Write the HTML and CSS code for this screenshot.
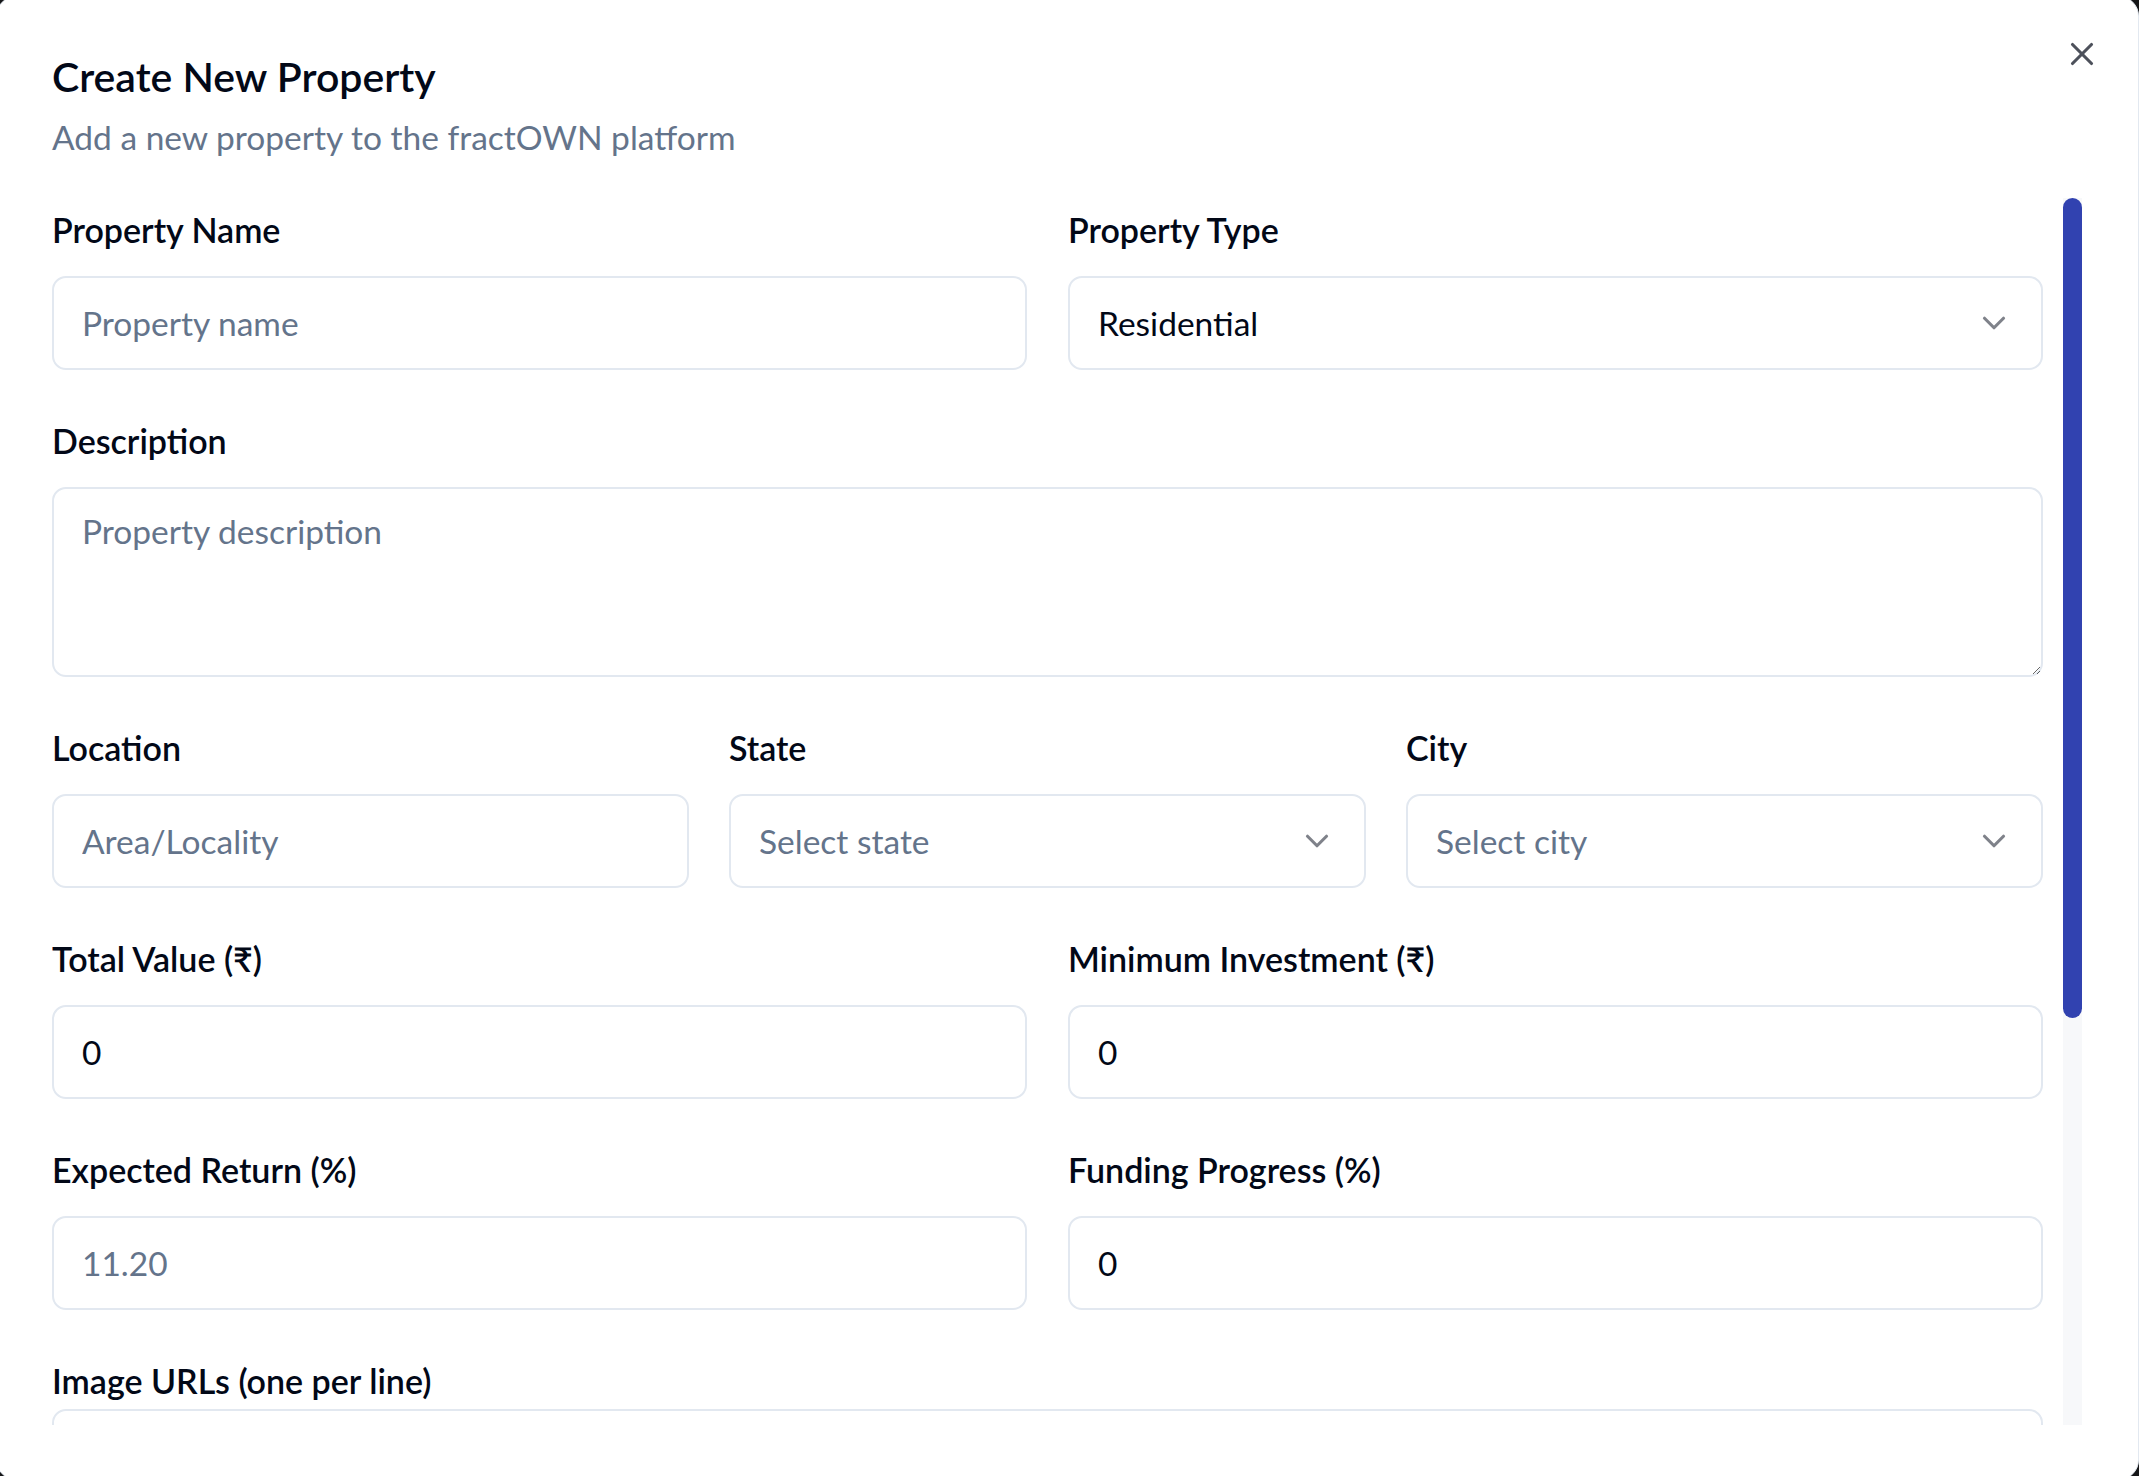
FILE: index.html
```html
<!DOCTYPE html>
<html lang="en">
<head>
<meta charset="utf-8">
<title>Create New Property</title>
<link rel="stylesheet" href="styles.css">
</head>
<body>
<div class="dialog" role="dialog">
  <div class="header">
    <h2 class="title">Create New Property</h2>
    <p class="desc">Add a new property to the fractOWN platform</p>
  </div>
  <div class="body">
    <div class="scroll">
      <form class="form">
        <div class="row two">
          <div class="field">
            <label class="label">Property Name</label>
            <input class="input" type="text" placeholder="Property name">
          </div>
          <div class="field">
            <label class="label">Property Type</label>
            <button type="button" class="select"><span class="val">Residential</span><svg class="chev" viewBox="0 0 24 24"><path d="m6 9 6 6 6-6"/></svg></button>
          </div>
        </div>
        <div class="field">
          <label class="label">Description</label>
          <textarea class="textarea" placeholder="Property description"></textarea>
        </div>
        <div class="row three">
          <div class="field">
            <label class="label">Location</label>
            <input class="input" type="text" placeholder="Area/Locality">
          </div>
          <div class="field">
            <label class="label">State</label>
            <button type="button" class="select"><span class="ph">Select state</span><svg class="chev" viewBox="0 0 24 24"><path d="m6 9 6 6 6-6"/></svg></button>
          </div>
          <div class="field">
            <label class="label">City</label>
            <button type="button" class="select"><span class="ph">Select city</span><svg class="chev" viewBox="0 0 24 24"><path d="m6 9 6 6 6-6"/></svg></button>
          </div>
        </div>
        <div class="row two">
          <div class="field">
            <label class="label">Total Value (₹)</label>
            <input class="input" type="text" value="0">
          </div>
          <div class="field">
            <label class="label">Minimum Investment (₹)</label>
            <input class="input" type="text" value="0">
          </div>
        </div>
        <div class="row two">
          <div class="field">
            <label class="label">Expected Return (%)</label>
            <input class="input" type="text" placeholder="11.20">
          </div>
          <div class="field">
            <label class="label">Funding Progress (%)</label>
            <input class="input" type="text" value="0">
          </div>
        </div>
        <div class="field tight">
          <label class="label">Image URLs (one per line)</label>
          <textarea class="textarea"></textarea>
        </div>
      </form>
    </div>
    <div class="rail" aria-hidden="true"><div class="thumb"></div></div>
  </div>
  <button type="button" class="close" aria-label="Close">
    <svg viewBox="0 0 24 24"><path d="M18 6 6 18"/><path d="m6 6 12 12"/></svg>
  </button>
</div>
</body>
</html>
```
FILE: styles.css
```css
html, body {
  margin: 0;
  padding: 0;
}
body {
  background: #151618;
  height: 1476px;
  overflow: hidden;
  font-family: "Lato", "Open Sans", sans-serif;
  color: #020817;
}
.dialog {
  position: relative;
  box-sizing: border-box;
  margin: -4px 0 0 -4px;
  width: 2143px;
  height: 1484px;
  padding: 55px 56px 54px 55px;
  border: 1px solid #e2e8f0;
  border-radius: 20px;
  background: #ffffff;
  display: flex;
  flex-direction: column;
  gap: 41px;
}
.header {
  display: flex;
  flex-direction: column;
  gap: 15px;
}
.title {
  margin: 0;
  font-size: 41px;
  line-height: 50px;
  font-weight: 600;
  color: #020817;
}
.desc {
  margin: 0;
  font-size: 33.5px;
  line-height: 40px;
  color: #64748b;
}
.body {
  flex: 1;
  min-height: 0;
  display: flex;
  gap: 20px;
}
.scroll {
  flex: 1;
  min-width: 0;
  overflow: hidden;
  padding-top: 12px;
}
.rail {
  flex: none;
  width: 19px;
  background: #f7f8fa;
  display: flex;
  flex-direction: column;
}
.thumb {
  height: 820px;
  border-radius: 10px;
  background: #3142b0;
}
.form {
  display: flex;
  flex-direction: column;
  gap: 51px;
}
.row {
  display: grid;
}
.row.two {
  grid-template-columns: 1fr 1fr;
  column-gap: 41px;
}
.row.three {
  grid-template-columns: 1fr 1fr 1fr;
  column-gap: 40px;
}
.field {
  display: flex;
  flex-direction: column;
  gap: 26px;
  min-width: 0;
}
.field.tight {
  gap: 8px;
}
.label {
  font-size: 34px;
  line-height: 40px;
  font-weight: 600;
  color: #020817;
}
.input, .select, .textarea {
  box-sizing: border-box;
  width: 100%;
  margin: 0;
  border: 2px solid #e2e8f0;
  border-radius: 14px;
  background: #ffffff;
  font-family: "Lato", "Open Sans", sans-serif;
  font-size: 33.5px;
  color: #020817;
  outline: none;
}
.input {
  height: 94px;
  padding: 0 28px;
}
.input::placeholder, .textarea::placeholder {
  color: #64748b;
  opacity: 1;
}
.select {
  height: 94px;
  padding: 0 28px;
  display: flex;
  align-items: center;
  justify-content: space-between;
  text-align: left;
  cursor: pointer;
}
.select .ph {
  color: #64748b;
}
.chev {
  width: 38px;
  height: 38px;
  fill: none;
  stroke: #020817;
  stroke-width: 2;
  stroke-linecap: round;
  stroke-linejoin: round;
  opacity: 0.5;
  flex: none;
}
.textarea {
  display: block;
  height: 190px;
  padding: 19px 28px;
  line-height: 47px;
  resize: vertical;
}
.close {
  position: absolute;
  top: 38px;
  right: 37px;
  width: 38px;
  height: 38px;
  padding: 0;
  border: none;
  background: none;
  opacity: 0.7;
  cursor: pointer;
}
.close svg {
  display: block;
  width: 38px;
  height: 38px;
  fill: none;
  stroke: #020817;
  stroke-width: 2;
  stroke-linecap: round;
  stroke-linejoin: round;
}
```
